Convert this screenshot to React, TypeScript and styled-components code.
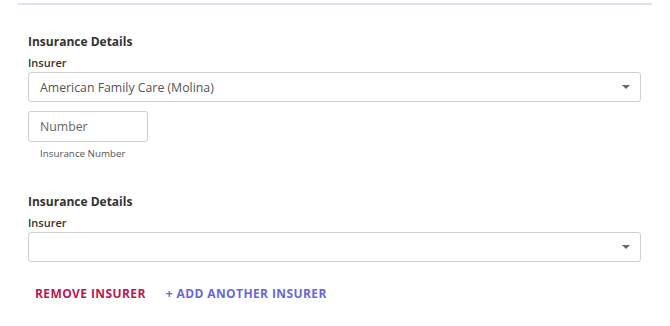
import React from "react";
import styled, { createGlobalStyle } from "styled-components";

const Global = createGlobalStyle`
  html, body { margin: 0; padding: 0; background: #fff; }
  body { font-family: "Open Sans", "Liberation Sans", sans-serif; color: #333; }
`;

const Page = styled.div`
  width: 670px;
  height: 326px;
  box-sizing: border-box;
  padding: 3px 18px 0 18px;
  display: flex;
  flex-direction: column;
`;

const Divider = styled.div`
  height: 2px;
  background: #e0e0ef;
  width: 634px;
`;

const Section = styled.section<{ $top: number }>`
  margin-top: ${(p) => p.$top}px;
  padding-left: 10px;
  display: flex;
  flex-direction: column;
  width: 613px;
`;

const Heading = styled.h3`
  margin: 0;
  font-size: 12px;
  font-weight: 700;
  line-height: 16px;
  color: #333;
`;

const Label = styled.label`
  margin-top: 6px;
  font-size: 11px;
  font-weight: 600;
  line-height: 14px;
  color: #333;
`;

const SelectBox = styled.div`
  margin-top: 2px;
  height: 30px;
  box-sizing: border-box;
  border: 1px solid #cfcfcf;
  border-radius: 3px;
  display: flex;
  align-items: center;
  padding: 0 10px 0 11px;
  font-size: 12.3px;
  color: #555;
`;

const SelectValue = styled.span`
  flex: 1;
`;

const Caret = styled.span`
  width: 0;
  height: 0;
  border-left: 4px solid transparent;
  border-right: 4px solid transparent;
  border-top: 4px solid #666;
`;

const NumberInput = styled.div`
  margin-top: 9px;
  width: 120px;
  height: 31px;
  box-sizing: border-box;
  border: 1px solid #cfcfcf;
  border-radius: 3px;
  display: flex;
  align-items: center;
  padding-left: 11px;
  font-size: 12.3px;
  color: #666;
`;

const Helper = styled.div`
  margin-top: 6px;
  padding-left: 12px;
  font-size: 9.8px;
  line-height: 12px;
  color: #555;
`;

const Actions = styled.div`
  margin-top: 23px;
  padding-left: 17px;
  display: flex;
  gap: 20px;
`;

const ActionButton = styled.button<{ $color: string }>`
  background: none;
  border: none;
  padding: 0;
  font-family: "Open Sans", "Liberation Sans", sans-serif;
  font-size: 12px;
  font-weight: 700;
  letter-spacing: 0.4px;
  color: ${(p) => p.$color};
  cursor: pointer;
`;

export default function App() {
  return (
    <>
      <Global />
      <Page>
        <Divider />
        <Section $top={29}>
          <Heading>Insurance Details</Heading>
          <Label>Insurer</Label>
          <SelectBox>
            <SelectValue>American Family Care (Molina)</SelectValue>
            <Caret />
          </SelectBox>
          <NumberInput>Number</NumberInput>
          <Helper>Insurance Number</Helper>
        </Section>
        <Section $top={34}>
          <Heading>Insurance Details</Heading>
          <Label>Insurer</Label>
          <SelectBox>
            <SelectValue />
            <Caret />
          </SelectBox>
        </Section>
        <Actions>
          <ActionButton $color="#b8174f">REMOVE INSURER</ActionButton>
          <ActionButton $color="#6a66d9">+ ADD ANOTHER INSURER</ActionButton>
        </Actions>
      </Page>
    </>
  );
}
